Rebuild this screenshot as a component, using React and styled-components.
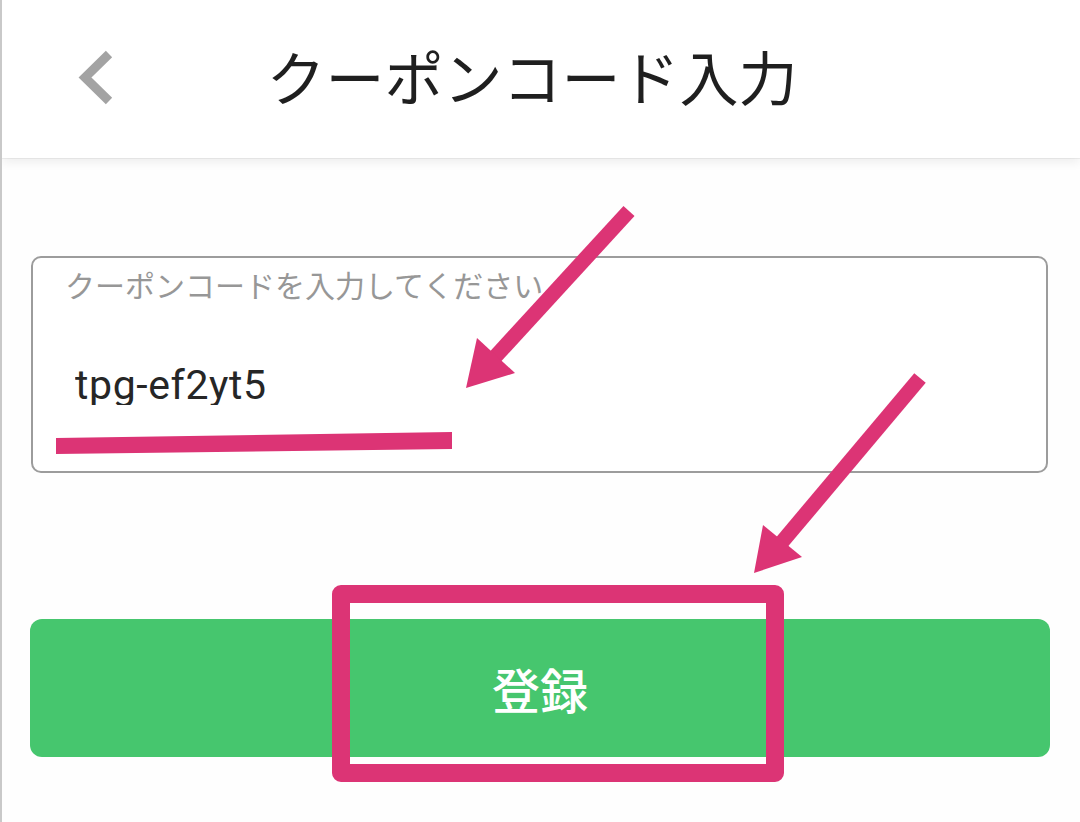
import React, { useState } from 'react';
import styled, { createGlobalStyle } from 'styled-components';

const GlobalStyle = createGlobalStyle`
  html, body {
    margin: 0;
    padding: 0;
    background: #ffffff;
  }
  #root {
    height: 822px;
  }
`;

const Page = styled.div`
  position: relative;
  width: 1080px;
  height: 822px;
  box-sizing: border-box;
  border-left: 2px solid #c9c9c9;
  background: #fefefe;
  overflow: hidden;
  font-family: "Noto Sans CJK JP", "Noto Sans", sans-serif;
`;

const Header = styled.header`
  position: relative;
  z-index: 1;
  display: grid;
  grid-template-columns: 198px 1fr 216px;
  align-items: center;
  height: 158px;
  background: #ffffff;
  box-shadow: 0 1px 0 rgba(0, 0, 0, 0.05), 0 4px 10px rgba(0, 0, 0, 0.07);
`;

const BackButton = styled.button`
  display: flex;
  align-items: center;
  width: 60px;
  height: 80px;
  margin-left: 72px;
  padding: 0;
  border: none;
  background: none;
  cursor: pointer;
`;

const Title = styled.h1`
  margin: 0;
  text-align: center;
  font-size: 59px;
  font-weight: 400;
  line-height: 1;
  color: #1f1f1f;
  padding-bottom: 8px;
`;

const Content = styled.main`
  display: flex;
  flex-direction: column;
  padding: 98px 30px 0 28px;
`;

const Field = styled.label`
  display: flex;
  flex-direction: column;
  height: 217px;
  margin: 0 2px 0 1px;
  padding: 8px 0 0 32px;
  box-sizing: border-box;
  border: 2px solid #9c9c9c;
  border-radius: 10px;
  background: #ffffff;
`;

const FieldLabel = styled.span`
  font-size: 30px;
  line-height: 36px;
  color: #979797;
`;

const CodeInput = styled.input`
  margin-top: 62px;
  margin-left: 10px;
  width: 600px;
  padding: 0;
  border: none;
  outline: none;
  background: transparent;
  font-family: Roboto, "Liberation Sans", sans-serif;
  font-size: 41px;
  line-height: 41px;
  height: 41px;
  letter-spacing: 0.6px;
  color: #262626;
`;

const SubmitButton = styled.button`
  display: flex;
  align-items: center;
  justify-content: center;
  height: 138px;
  margin-top: 146px;
  border: none;
  border-radius: 12px;
  background: #46c66e;
  color: #ffffff;
  font-family: "Noto Sans CJK JP", sans-serif;
  font-size: 48px;
  font-weight: 500;
  cursor: pointer;
`;

const Annotations = styled.svg`
  position: absolute;
  top: 0;
  left: -2px;
  z-index: 2;
  pointer-events: none;
`;

const PINK = '#dc3475';

const Arrow = ({ from, to, head }) => (
  <g>
    <line x1={from[0]} y1={from[1]} x2={to[0]} y2={to[1]} stroke={PINK} strokeWidth="15" />
    <polygon points={head.map((p) => p.join(',')).join(' ')} fill={PINK} />
  </g>
);

const App = () => {
  const [code, setCode] = useState('tpg-ef2yt5');

  return (
    <>
      <GlobalStyle />
      <Page>
        <Header>
          <BackButton aria-label="戻る">
            <svg width="40" height="60" viewBox="0 0 40 60">
              <polyline points="35,5 11,28.5 35,52" fill="none" stroke="#a3a3a3" strokeWidth="9" strokeLinejoin="miter" />
            </svg>
          </BackButton>
          <Title>クーポンコード入力</Title>
          <div />
        </Header>
        <Content>
          <Field>
            <FieldLabel>クーポンコードを入力してください</FieldLabel>
            <CodeInput value={code} onChange={(e) => setCode(e.target.value)} />
          </Field>
          <SubmitButton>登録</SubmitButton>
        </Content>

        <Annotations width="1080" height="822" viewBox="0 0 1080 822">
          <Arrow from={[629, 211]} to={[495, 357]} head={[[466, 388], [477, 338], [515, 373]]} />
          <Arrow from={[920, 378]} to={[782, 542]} head={[[754, 573], [763, 525], [802, 557]]} />
          <polygon points="56,438 452,432 452,449 56,454" fill={PINK} />
          <rect x="341" y="594" width="434" height="179" fill="none" stroke={PINK} strokeWidth="18" strokeLinejoin="round" />
        </Annotations>
      </Page>
    </>
  );
};

export default App;
